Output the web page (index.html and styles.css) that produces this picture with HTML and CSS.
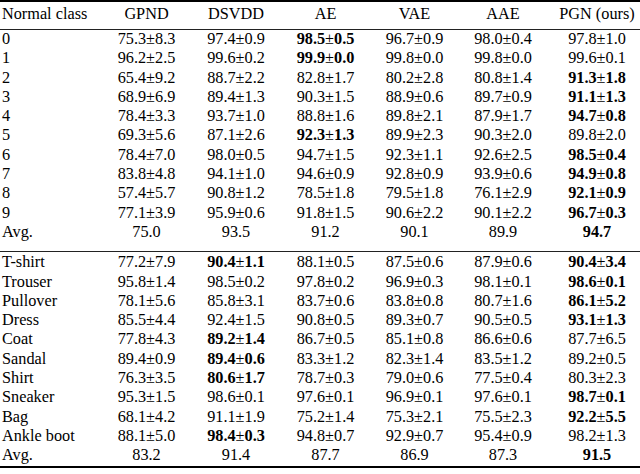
FILE: index.html
```html
<!DOCTYPE html>
<html lang="en">
<head>
    <meta charset="UTF-8">
    <meta name="viewport" content="width=device-width, initial-scale=1.0">
    <title>Normal class results</title>
    <link rel="stylesheet" href="styles.css">
</head>
<body>
<table class="results">
    <colgroup>
        <col class="c-name">
        <col class="c-gpnd">
        <col class="c-dsvdd">
        <col class="c-ae">
        <col class="c-vae">
        <col class="c-aae">
        <col class="c-pgn">
    </colgroup>
    <thead>
        <tr>
            <th>Normal class</th>
            <th>GPND</th>
            <th>DSVDD</th>
            <th>AE</th>
            <th>VAE</th>
            <th>AAE</th>
            <th>PGN (ours)</th>
        </tr>
    </thead>
    <tbody class="mnist">
        <tr><td>0</td><td>75.3±8.3</td><td>97.4±0.9</td><td><b>98.5</b>±<b>0.5</b></td><td>96.7±0.9</td><td>98.0±0.4</td><td>97.8±1.0</td></tr>
        <tr><td>1</td><td>96.2±2.5</td><td>99.6±0.2</td><td><b>99.9</b>±<b>0.0</b></td><td>99.8±0.0</td><td>99.8±0.0</td><td>99.6±0.1</td></tr>
        <tr><td>2</td><td>65.4±9.2</td><td>88.7±2.2</td><td>82.8±1.7</td><td>80.2±2.8</td><td>80.8±1.4</td><td><b>91.3</b>±<b>1.8</b></td></tr>
        <tr><td>3</td><td>68.9±6.9</td><td>89.4±1.3</td><td>90.3±1.5</td><td>88.9±0.6</td><td>89.7±0.9</td><td><b>91.1</b>±<b>1.3</b></td></tr>
        <tr><td>4</td><td>78.4±3.3</td><td>93.7±1.0</td><td>88.8±1.6</td><td>89.8±2.1</td><td>87.9±1.7</td><td><b>94.7</b>±<b>0.8</b></td></tr>
        <tr><td>5</td><td>69.3±5.6</td><td>87.1±2.6</td><td><b>92.3</b>±<b>1.3</b></td><td>89.9±2.3</td><td>90.3±2.0</td><td>89.8±2.0</td></tr>
        <tr><td>6</td><td>78.4±7.0</td><td>98.0±0.5</td><td>94.7±1.5</td><td>92.3±1.1</td><td>92.6±2.5</td><td><b>98.5</b>±<b>0.4</b></td></tr>
        <tr><td>7</td><td>83.8±4.8</td><td>94.1±1.0</td><td>94.6±0.9</td><td>92.8±0.9</td><td>93.9±0.6</td><td><b>94.9</b>±<b>0.8</b></td></tr>
        <tr><td>8</td><td>57.4±5.7</td><td>90.8±1.2</td><td>78.5±1.8</td><td>79.5±1.8</td><td>76.1±2.9</td><td><b>92.1</b>±<b>0.9</b></td></tr>
        <tr><td>9</td><td>77.1±3.9</td><td>95.9±0.6</td><td>91.8±1.5</td><td>90.6±2.2</td><td>90.1±2.2</td><td><b>96.7</b>±<b>0.3</b></td></tr>
        <tr class="avg"><td>Avg.</td><td>75.0</td><td>93.5</td><td>91.2</td><td>90.1</td><td>89.9</td><td><b>94.7</b></td></tr>
    </tbody>
    <tbody class="fashion">
        <tr><td>T-shirt</td><td>77.2±7.9</td><td><b>90.4</b>±<b>1.1</b></td><td>88.1±0.5</td><td>87.5±0.6</td><td>87.9±0.6</td><td><b>90.4</b>±<b>3.4</b></td></tr>
        <tr><td>Trouser</td><td>95.8±1.4</td><td>98.5±0.2</td><td>97.8±0.2</td><td>96.9±0.3</td><td>98.1±0.1</td><td><b>98.6</b>±<b>0.1</b></td></tr>
        <tr><td>Pullover</td><td>78.1±5.6</td><td>85.8±3.1</td><td>83.7±0.6</td><td>83.8±0.8</td><td>80.7±1.6</td><td><b>86.1</b>±<b>5.2</b></td></tr>
        <tr><td>Dress</td><td>85.5±4.4</td><td>92.4±1.5</td><td>90.8±0.5</td><td>89.3±0.7</td><td>90.5±0.5</td><td><b>93.1</b>±<b>1.3</b></td></tr>
        <tr><td>Coat</td><td>77.8±4.3</td><td><b>89.2</b>±<b>1.4</b></td><td>86.7±0.5</td><td>85.1±0.8</td><td>86.6±0.6</td><td>87.7±6.5</td></tr>
        <tr><td>Sandal</td><td>89.4±0.9</td><td><b>89.4</b>±<b>0.6</b></td><td>83.3±1.2</td><td>82.3±1.4</td><td>83.5±1.2</td><td>89.2±0.5</td></tr>
        <tr><td>Shirt</td><td>76.3±3.5</td><td><b>80.6</b>±<b>1.7</b></td><td>78.7±0.3</td><td>79.0±0.6</td><td>77.5±0.4</td><td>80.3±2.3</td></tr>
        <tr><td>Sneaker</td><td>95.3±1.5</td><td>98.6±0.1</td><td>97.6±0.1</td><td>96.9±0.1</td><td>97.6±0.1</td><td><b>98.7</b>±<b>0.1</b></td></tr>
        <tr><td>Bag</td><td>68.1±4.2</td><td>91.1±1.9</td><td>75.2±1.4</td><td>75.3±2.1</td><td>75.5±2.3</td><td><b>92.2</b>±<b>5.5</b></td></tr>
        <tr><td>Ankle boot</td><td>88.1±5.0</td><td><b>98.4</b>±<b>0.3</b></td><td>94.8±0.7</td><td>92.9±0.7</td><td>95.4±0.9</td><td>98.2±1.3</td></tr>
        <tr class="avg"><td>Avg.</td><td>83.2</td><td>91.4</td><td>87.7</td><td>86.9</td><td>87.3</td><td><b>91.5</b></td></tr>
    </tbody>
</table>
</body>
</html>
```

FILE: styles.css
```css
body {
    margin: 0;
    background: #fff;
    color: #000;
    font-family: "Liberation Serif", "Times New Roman", serif;
    font-size: 16.25px;
}
.results {
    width: 640px;
    table-layout: fixed;
    border-collapse: separate;
    border-spacing: 0;
}
.c-name { width: 102px; }
.c-gpnd { width: 89px; }
.c-dsvdd { width: 90px; }
.c-ae { width: 89px; }
.c-vae { width: 89px; }
.c-aae { width: 88px; }
.c-pgn { width: 93px; }
th, td {
    padding: 0;
    line-height: 19.3px;
    font-weight: normal;
    text-align: center;
    white-space: nowrap;
}
th:first-child, td:first-child {
    text-align: left;
    padding-left: 2px;
}
th:last-child, td:last-child {
    padding-left: 7px;
}
th {
    padding-top: 3px;
    padding-bottom: 4.7px;
    border-top: 2px solid #000;
    border-bottom: 1px solid #222;
}
.mnist .avg td {
    padding-bottom: 8.7px;
    border-bottom: 1px solid #222;
}
.fashion tr:first-child td {
    padding-top: 1.3px;
}
.fashion .avg td {
    border-bottom: 2px solid #000;
}
b {
    font-weight: bold;
}
```
